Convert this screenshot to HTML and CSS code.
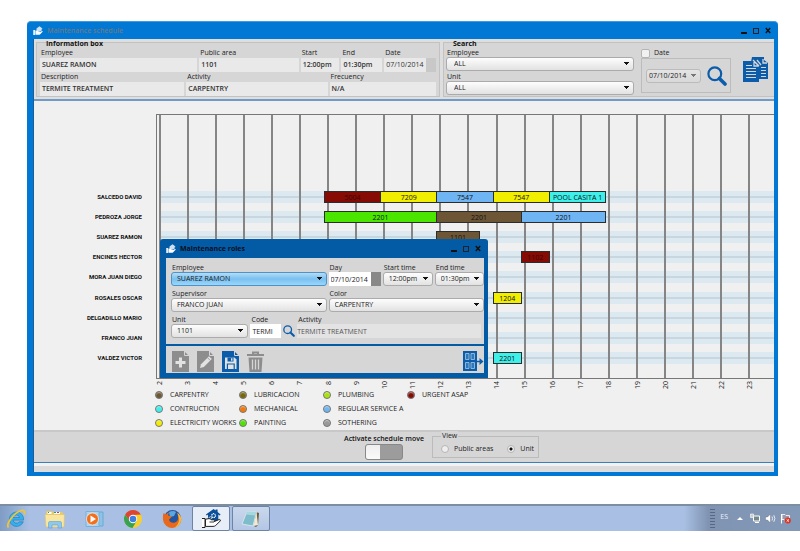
FILE: index.html
```html
<!DOCTYPE html>
<html lang="en">
<head>
<meta charset="utf-8">
<title>Maintenance schedule</title>
<link rel="stylesheet" href="styles.css">
</head>
<body>
<svg class="defs" aria-hidden="true">
  <symbol id="lens" viewBox="0 0 20 20"><circle cx="7.800" cy="7.800" r="6.400" fill="none" stroke="#0b5cab" stroke-width="2.200"/><path d="M12.400 12.400L18 18" stroke="#0b5cab" stroke-width="3.600" stroke-linecap="round"/></symbol>
  <symbol id="hand" viewBox="0 0 20 20"><path d="M7 10V5.600L5.800 6.600 4.900 5.500 12.600 0l2 1.500V.6h2v2.500l3 2.300-.9 1.100-1.400-1V13H8z" fill="#0b4f9b"/><g fill="none" stroke="#fff"><circle cx="12.600" cy="6.600" r="1.900" stroke-width="1.200" stroke-dasharray="1 .5"/><circle cx="9.400" cy="9" r="1.300" stroke-dasharray=".8 .4"/></g><path d="M4.500 10.200L8 9.600q1.600 0 2.200 1.200h3q1 .8 0 1.800l5.200-2.200q1.500.3.800 1.600l-4.600 4.600q-1 .8-2.600.8H4.500z" fill="#fff" stroke="#222" stroke-width="1" stroke-linejoin="round"/><path d="M1 9.500h3v9H1" fill="#fff" stroke="#222" stroke-width="1"/><path d="M8.500 13h4.500" stroke="#222" stroke-width=".9"/></symbol>
  <symbol id="hand-small" viewBox="0 0 10 10"><path d="M3.500 4V2.500L6.500.2l2 1.500 1 1.300-1 .5V5H4z" fill="#cfe0f2"/><path d="M.3 4h1.600v5H.3zM2.400 4.600l1.800-.2 1 .8h1.500v.8l2.500-1q.8.2.4.8L7.200 8.300q-.5.500-1.300.5H2.400z" fill="#fff"/></symbol>
</svg>

<main class="window">
  <header class="titlebar">
    <svg class="app-icon"><use href="#hand-small"/></svg>
    <h1>Maintenance schedule</h1>
    <div class="controls">
      <button aria-label="Minimize"><i class="min"></i></button>
      <button aria-label="Maximize"><i class="max"></i></button>
      <button aria-label="Close"><svg viewBox="0 0 6 6"><path d="M.8.6l4.400 4.800M5.200.6L.8 5.400" stroke="#111" stroke-width="1.500"/></svg></button>
    </div>
  </header>

  <div class="client">
    <section class="toolbar">
      <fieldset class="group info">
        <legend>Information box</legend>
        <dl class="facts first">
          <div><dt>Employee</dt><dd>SUAREZ RAMON</dd></div>
          <div><dt>Public area</dt><dd>1101</dd></div>
          <div><dt>Start</dt><dd>12:00pm</dd></div>
          <div><dt>End</dt><dd>01:30pm</dd></div>
          <div><dt>Date</dt><dd class="date">07/10/2014</dd></div>
        </dl>
        <dl class="facts second">
          <div><dt>Description</dt><dd>TERMITE TREATMENT</dd></div>
          <div><dt>Activity</dt><dd>CARPENTRY</dd></div>
          <div><dt>Frecuency</dt><dd>N/A</dd></div>
        </dl>
      </fieldset>
      <fieldset class="group search">
        <legend>Search</legend>
        <div class="search-row">
          <div class="filters">
            <div class="field"><label for="s-emp">Employee</label><select id="s-emp"><option>ALL</option></select></div>
            <div class="field"><label for="s-unit">Unit</label><select id="s-unit"><option>ALL</option></select></div>
          </div>
          <div class="by-date">
            <label class="check"><input type="checkbox"> Date</label>
            <div class="date-box">
              <select class="dim" aria-label="Search date"><option>07/10/2014</option></select>
              <button aria-label="Search"><svg class="big-lens"><use href="#lens"/></svg></button>
            </div>
          </div>
          <button class="copy" aria-label="Reports"><svg viewBox="0 0 26 26"><path d="M9 0h12v3l4 3v16H16V9l-5-4H8z" fill="#0b5cab"/><path d="M0 4h10l6 6v15H0z" fill="#0b5cab"/><path d="M10 3l6 6M11 5v4h4M20 2v4h4M14 3l4 5" stroke="#d6d6d6" stroke-width="1.300" fill="none"/><path d="M3 8.500h6M3 11.500h10M3 14.500h10M3 17.500h10M3 20.500h10M18 10.500h5M18 13.500h5M18 16.500h5M18 19.500h5" stroke="#d6d6d6" stroke-width="1.100"/></svg></button>
        </div>
      </fieldset>
    </section>

    <section class="chart">
      <div class="names rows">
        <span>SALCEDO DAVID</span><span>PEDROZA JORGE</span><span>SUAREZ RAMON</span><span>ENCINES HECTOR</span><span>MORA JUAN DIEGO</span><span>ROSALES OSCAR</span><span>DELGADILLO MARIO</span><span>FRANCO JUAN</span><span>VALDEZ VICTOR</span>
      </div>
      <div class="plot">
        <div class="bands rows"><i></i><i></i><i></i><i></i><i></i><i></i><i></i><i></i><i></i></div>
        <div class="lines"><i></i><i></i><i></i><i></i><i></i><i></i><i></i><i></i><i></i><i></i><i></i><i></i><i></i><i></i><i></i><i></i><i></i><i></i><i></i><i></i><i></i><i></i></div>
        <div class="tasks">
          <span class="maroon" style="grid-area:1/13/auto/span 4">5004</span>
          <span class="yellow" style="grid-area:1/17/auto/span 4">7209</span>
          <span class="sky" style="grid-area:1/21/auto/span 4">7547</span>
          <span class="yellow" style="grid-area:1/25/auto/span 4">7547</span>
          <span class="cyan" style="grid-area:1/29/auto/span 4">POOL CASITA 1</span>
          <span class="green" style="grid-area:2/13/auto/span 8">2201</span>
          <span class="brown" style="grid-area:2/21/auto/span 6">2201</span>
          <span class="sky" style="grid-area:2/27/auto/span 6">2201</span>
          <span class="brown" style="grid-area:3/21/auto/span 3">1101</span>
          <span class="maroon" style="grid-area:4/27/auto/span 2">1102</span>
          <span class="yellow" style="grid-area:6/25/auto/span 2">1204</span>
          <span class="cyan" style="grid-area:9/25/auto/span 2">2201</span>
        </div>
      </div>
      <div class="axis"><b>2</b><b>3</b><b>4</b><b>5</b><b>6</b><b>7</b><b>8</b><b>9</b><b>10</b><b>11</b><b>12</b><b>13</b><b>14</b><b>15</b><b>16</b><b>17</b><b>18</b><b>19</b><b>20</b><b>21</b><b>22</b><b>23</b></div>
      <ul class="key">
        <li><i class="brown"></i>CARPENTRY</li><li><i class="cyan"></i>CONTRUCTION</li><li><i class="yellow"></i>ELECTRICITY WORKS</li>
        <li><i class="olive"></i>LUBRICACION</li><li><i class="orange"></i>MECHANICAL</li><li><i class="green"></i>PAINTING</li>
        <li><i class="lime"></i>PLUMBING</li><li><i class="sky"></i>REGULAR SERVICE A</li><li><i class="gray"></i>SOTHERING</li>
        <li><i class="maroon"></i>URGENT ASAP</li>
      </ul>

      <section class="dialog" role="dialog" aria-labelledby="roles">
        <header class="titlebar">
          <svg class="app-icon"><use href="#hand-small"/></svg>
          <h2 id="roles">Maintenance roles</h2>
          <div class="controls">
            <button aria-label="Minimize"><i class="min"></i></button>
            <button aria-label="Maximize"><i class="max"></i></button>
            <button aria-label="Close"><svg viewBox="0 0 6 6"><path d="M.8.6l4.400 4.800M5.200.6L.8 5.400" stroke="#111" stroke-width="1.500"/></svg></button>
          </div>
        </header>
        <form class="form">
          <div class="line who">
            <div class="field"><label for="emp">Employee</label><select id="emp" class="active"><option>SUAREZ RAMON</option></select></div>
            <div class="field"><label for="day">Day</label><input id="day" class="day" value="07/10/2014"></div>
            <div class="field"><label for="start">Start time</label><select id="start"><option>12:00pm</option></select></div>
            <div class="field"><label for="end">End time</label><select id="end"><option>01:30pm</option></select></div>
          </div>
          <div class="line kind">
            <div class="field"><label for="sup">Supervisor</label><select id="sup"><option>FRANCO JUAN</option></select></div>
            <div class="field"><label for="color">Color</label><select id="color"><option>CARPENTRY</option></select></div>
          </div>
          <div class="line work">
            <div class="field"><label for="unit">Unit</label><select id="unit"><option>1101</option></select></div>
            <div class="field"><label for="code">Code</label><input id="code" value="TERMI"></div>
            <button type="button" class="find" aria-label="Find activity"><svg><use href="#lens"/></svg></button>
            <div class="field activity"><label for="act">Activity</label><input id="act" value="TERMITE TREATMENT" readonly></div>
          </div>
        </form>
        <footer class="actions">
          <button aria-label="New"><svg viewBox="0 0 17 21"><path d="M0 0h12l5 5v16H0z" fill="#8d8d8d"/><path d="M12.500 0v4.500H17" stroke="#d6d6d6" fill="none"/><path d="M8.500 6.500v10M3.500 11.500h10" stroke="#e2e2e2" stroke-width="3"/></svg></button>
          <button aria-label="Edit"><svg viewBox="0 0 17 21"><path d="M0 0h12l5 5v16H0z" fill="#8d8d8d"/><path d="M12.500 0v4.500H17" stroke="#d6d6d6" fill="none"/><path d="M3 17l1-3.700 8-8 2.800 2.800-8 8z" fill="#e2e2e2"/><path d="M10.500 6.700l2.800 2.800" stroke="#8d8d8d" stroke-width=".8"/></svg></button>
          <button aria-label="Save"><svg viewBox="0 0 17 21"><path d="M0 0h12l5 5v16H0z" fill="#0b5cab"/><path d="M12.500 0v4.500H17" stroke="#d6d6d6" fill="none"/><path d="M3 6.500h9.500l2 2V18H3z" fill="#e2e2e2"/><path d="M5.500 6.500h6v4h-6zM4.800 12.500h8V18h-8z" fill="#0b5cab"/><path d="M9 7.200h1.500v2.500H9zM6 13.500h5.600V18H6z" fill="#e2e2e2"/></svg></button>
          <button aria-label="Delete"><svg viewBox="0 0 17 21"><path d="M0 4h17M6 4V1.500h5V4" stroke="#8d8d8d" stroke-width="2" fill="none"/><path d="M1.500 6.500h14L14.500 21h-12z" fill="#8d8d8d"/><path d="M5.500 8.500v10M8.500 8.500v10M11.500 8.500v10" stroke="#d6d6d6" stroke-width="1.300"/></svg></button>
          <button class="exit" aria-label="Exit"><svg viewBox="0 0 21 21"><path d="M0 0h14v20H0z" fill="#0b5cab"/><path d="M2.500 2.500h3.500v6H2.500zM8 2.500h3.500v6H8zM2.500 11.500h3.500v6H2.500zM8 11.500h3.500v6H8z" fill="#2b78bd" stroke="#9dbcd8" stroke-width=".9"/><path d="M13 10.500h5" stroke="#0b5cab" stroke-width="1.500"/><path d="M16.500 7l4 3.500-4 3.500z" fill="#0b5cab"/></svg></button>
        </footer>
      </section>
    </section>

    <section class="options">
      <label class="move">Activate schedule move<input type="checkbox" role="switch"></label>
      <fieldset class="view">
        <legend>View</legend>
        <label><input type="radio" name="view">Public areas</label>
        <label><input type="radio" name="view" checked>Unit</label>
      </fieldset>
    </section>
    <div class="status"></div>
  </div>
</main>

<nav class="taskbar" aria-label="Taskbar">
  <button aria-label="Internet Explorer"><svg viewBox="0 0 20 20"><path d="M10.500 3a7.200 7.200 0 1 0 6.800 9.800h-4a3.500 3.500 0 0 1-6.300-1.700h10.600A7.200 7.200 0 0 0 10.500 3zM7 8.500a3.400 3.400 0 0 1 6.600 0z" fill="#35b0ea" stroke="#1779be" stroke-width=".6"/><path d="M2.500 18.500C-.5 15 8 3.500 15.500 1.500c3.500-.8 3.500 2 2.500 4" fill="none" stroke="#f4c52d" stroke-width="1.700"/></svg></button>
  <button aria-label="Explorer"><svg viewBox="0 0 20 20"><path d="M1 3q0-1 1-1h5l1 1h9q1 0 1 1v13H1z" fill="#e9c964"/><path d="M2.500 3h4v2h-4zM9 3h6v2H9z" fill="#fff"/><path d="M3 3h1v1H3zM9 3h2v1H9z" fill="#2e9b4d"/><path d="M12 3h2v1h-2z" fill="#c43"/><path d="M0 5.500h19.500L19 18H1z" fill="#f8e6a1" stroke="#dfc066" stroke-width=".6"/><path d="M3.500 19v-5q0-1.500 1.500-1.500h10q1.500 0 1.500 1.500v5h-3.500v-3H7v3z" fill="#8fc8ec" stroke="#5ba2d0" stroke-width=".6"/></svg></button>
  <button aria-label="Media Player"><svg viewBox="0 0 20 20"><path d="M5 3h14v14H5z" fill="#8dc3e6" stroke="#6aa8d2"/><path d="M2 2.500h13v15H2z" fill="#a9d5f0" stroke="#74b2db"/><circle cx="8.500" cy="10" r="6" fill="#f26f1d" stroke="#fff" stroke-width=".6"/><path d="M6.500 6.500l5.500 3.500-5.500 3.500z" fill="#fff"/></svg></button>
  <button aria-label="Chrome"><svg viewBox="0 0 20 20"><circle cx="10" cy="10" r="9" fill="#f7cf2e"/><path d="M2.200 5.500A9 9 0 0 1 17.800 5.500L10 6 6.200 12z" fill="#dc4436"/><path d="M2.200 5.500A9 9 0 0 0 9.500 19l4-7L6.500 12z" fill="#35a350"/><circle cx="10" cy="10" r="4.200" fill="#fff"/><circle cx="10" cy="10" r="3.300" fill="#3e7fe0"/></svg></button>
  <button aria-label="Firefox"><svg viewBox="0 0 20 20"><circle cx="10.500" cy="9.500" r="8.500" fill="#24549f"/><path d="M7 3q4-2 7 0l-2 4-4 1z" fill="#5aa8df"/><path d="M1.500 4l2.500 1.500Q5.500 3.500 7 3.500L6 6.500l4 1-3 3q1 4 6 3 4-1.500 3-7l-1-3q4 3 4.300 7A9.200 9.200 0 0 1 1 11Q.5 7 1.500 4z" fill="#e8691b"/><path d="M15.500 4q4 3 3.700 7-1 6-7 8 5-4 5-9z" fill="#f9b930"/></svg></button>
  <button class="open current" aria-label="Maintenance schedule"><svg><use href="#hand"/></svg></button>
  <button class="open" aria-label="Notepad"><svg viewBox="0 0 20 20"><path d="M15 3l3 1-1 12-2 2-2-1z" fill="#6d5a3c"/><path d="M6 2.500l9.500.5L12 17 1 15z" fill="#7fbccb" stroke="#e4f2f4" stroke-width=".7"/><path d="M6 2.500l9.500.5-1 3.500-10-1z" fill="#a8d8df"/><path d="M15.500 3l1.500 13-4.500 1z" fill="#f1ead6"/></svg></button>
  <div class="tray">
    <i class="grip"></i>
    <span>ES</span>
    <i class="up"></i>
    <svg viewBox="0 0 11 11"><path d="M3.500 3h6v5h-6zM5 9.500h4" fill="#788" stroke="#fff"/><path d="M.5 1h3v3.500h-3z" fill="#ccc" stroke="#fff" stroke-width=".6"/></svg>
    <svg viewBox="0 0 11 11"><path d="M.5 4h2L5.500 1v9L2.500 7h-2z" fill="#fff" stroke="#667" stroke-width=".4"/><path d="M7 3.500q1.200 2 0 4M8.800 2.200q2.200 3.300 0 6.600" stroke="#fff" fill="none" stroke-width=".8"/></svg>
    <svg viewBox="0 0 11 11"><path d="M1.500 1v9.500" stroke="#fff"/><path d="M2 1.500h3l1 1h3.500v5H5l-1-1H2z" fill="#99a" stroke="#fff" stroke-width=".8"/><circle cx="7.800" cy="7.500" r="3" fill="#e0321f"/><path d="M6.600 6.300L9 8.700M9 6.300L6.600 8.700" stroke="#fff" stroke-width=".9"/></svg>
  </div>
</nav>
</body>
</html>
```
FILE: styles.css
```css
* { box-sizing: border-box; }
body {
  margin: 0;
  min-height: 100vh;
  background: #fff;
  color: #222;
  font: 7px/10px "Open Sans", "Noto Sans", sans-serif;
}
h1, h2, dl, dd, ul, fieldset { margin: 0; padding: 0; border: 0; min-width: 0; }
ul { list-style: none; }
button { display: block; padding: 0; border: 0; background: none; }
svg { display: block; }
.defs { position: absolute; width: 0; height: 0; }
input, select { font: inherit; color: inherit; margin: 0; min-width: 0; }

/* windows */
.window {
  margin: 21px 22px 0 27px;
  padding: 0 4px 4px 6px;
  background: #0078d4;
  border: 1px solid #3e9be0;
  border-width: 1px 0 0;
  border-radius: 4px 4px 0 0;
}
.titlebar { display: flex; align-items: center; height: 17px; gap: 4px; }
.titlebar h1, .titlebar h2 { flex: 1; font-size: 7px; font-weight: 600; }
.titlebar h1 { color: #6b7885; }
.titlebar h2 { color: #0b0f1c; font-weight: 700; }
.app-icon { width: 10px; height: 10px; }
.controls { display: flex; gap: 5px; padding-right: 2px; }
.controls button { width: 7px; height: 7px; }
.controls svg { width: 6px; height: 7px; }
.min, .max { display: block; width: 6px; height: 6px; }
.min { border-bottom: 2px solid #111; }
.max { border: 1px solid #222; }
.client { border-left: 1px solid #1c5c98; background: #f0f0f0; }

/* toolbar */
.toolbar {
  display: grid;
  grid-template-columns: 404px 1fr;
  gap: 3px;
  padding: 3px 0 2px 2px;
  background: #dedede;
  border-bottom: 2px solid #6f9cc7;
}
.group {
  position: relative;
  border: 1px solid #c2c2c2;
  background: #d6d6d6;
  height: 55px;
}
.group > legend {
  position: absolute;
  top: -4px;
  left: 7px;
  color: #111;
  font-weight: 700;
  line-height: 9px;
}
.info { padding: 5px 3px 0; }
.facts { display: grid; column-gap: 2px; }
.first { grid-template-columns: 158fr 100fr 39fr 41fr 52fr; }
.second { grid-template-columns: 145fr 142fr 107fr; }
.facts dt { padding-left: 1px; line-height: 10px; white-space: nowrap; }
.facts dd {
  height: 14px;
  padding-left: 2px;
  background: #e9e9e9;
  color: #333;
  font-weight: 600;
  line-height: 14px;
  white-space: nowrap;
}
.facts .date { border-right: 10px solid #c8c8c8; font-weight: 400; }
.search { padding: 5px 0 0 2px; border-right: 0; }
.search-row {
  display: grid;
  grid-template-columns: 188fr 90fr 36fr;
  column-gap: 7px;
}
.field { display: flex; flex-direction: column; min-width: 0; }
.field label { padding-left: 1px; line-height: 9px; white-space: nowrap; }
.filters { display: grid; row-gap: 1px; }
select {
  --arrow: #111;
  --face: linear-gradient(#fdfdfd, #e2e2e2);
  appearance: none;
  width: 100%;
  height: 14px;
  padding: 0 10px 0 7px;
  border: 1px solid #ababab;
  border-radius: 3px;
  background:
    linear-gradient(var(--arrow), var(--arrow)) right 4px top 4px / 5px 1px no-repeat,
    linear-gradient(var(--arrow), var(--arrow)) right 5px top 5px / 3px 1px no-repeat,
    linear-gradient(var(--arrow), var(--arrow)) right 6px top 6px / 1px 1px no-repeat,
    var(--face);
  line-height: 12px;
}
select.active { --face: linear-gradient(#b5dcf6, #79c0f0 50%, #9ad6fb); border-color: #4d92c8; }
select.dim { --arrow: #777; --face: linear-gradient(#e4e4e4, #d8d8d8); padding: 0 8px 0 2px; border-color: #bbb; }
.check { display: flex; align-items: center; gap: 4px; }
.check input {
  appearance: none;
  width: 9px;
  height: 9px;
  border: 1px solid #b4b4b4;
  border-radius: 2px;
  background: #f1f1f1;
}
.date-box {
  display: flex;
  align-items: center;
  gap: 6px;
  height: 35px;
  padding: 0 3px 0 4px;
  border: 1px solid #bcbcbc;
}
.date-box select { flex: 1; }
.big-lens { width: 20px; height: 20px; }
.copy { align-self: start; padding: 9px 0 0 5px; }
.copy svg { width: 26px; height: 26px; }

/* chart */
.chart {
  position: relative;
  display: grid;
  grid-template-columns: 122px 1fr;
  padding-top: 13px;
}
.rows, .tasks { display: grid; grid-template-rows: repeat(9, 1fr); height: 181px; }
.names {
  margin-top: 73px;
  padding-right: 14px;
  justify-items: end;
  align-items: center;
  color: #111;
  font-family: Roboto, "Open Sans", sans-serif;
  font-size: 6px;
  font-weight: 700;
}
.plot {
  display: grid;
  border: solid #777;
  border-width: 1px 0 1px 1px;
  height: 265px;
}
.plot > * { grid-area: 1 / 1; min-width: 0; }
.bands, .tasks { margin-top: 72px; }
.bands { padding-left: 3px; align-items: center; }
.bands i {
  height: 12px;
  background: linear-gradient(#dce9f1 5px, #c8d7df 5px 7px, #dce9f1 7px);
}
.lines, .axis { display: grid; grid-template-columns: repeat(22, 1fr); }
.lines { padding-left: 2px; margin-right: -2px; overflow: hidden; }
.lines i { border-left: 2px solid #858585; }
.tasks { grid-template-columns: repeat(44, 1fr); align-items: center; margin-left: -2px; }
.tasks span {
  height: 12px;
  margin-right: -1px;
  border: 1px solid #2c2c2c;
  overflow: hidden;
  color: #111;
  line-height: 11px;
  text-align: center;
  white-space: nowrap;
}
.maroon { background: #850b04; }
.yellow { background: #f2ee00; }
.sky { background: #70b5f3; }
.cyan { background: #3df0ea; }
.green { background: #4be600; }
.brown { background: #6d5636; }
.olive { background: #77680a; }
.orange { background: #f4780c; }
.lime { background: #a9e30a; }
.gray { background: #999; }
.tasks .maroon { color: #3a0500; }
.axis { grid-column: 2; height: 9px; padding-top: 2px; }
.axis b {
  justify-self: start;
  align-self: start;
  width: 8px;
  font-weight: 400;
  line-height: 8px;
  writing-mode: vertical-rl;
  transform: rotate(180deg);
}
.key {
  grid-column: 2;
  display: grid;
  grid-auto-flow: column;
  grid-template-rows: repeat(3, 14px);
  grid-auto-columns: 84px;
  justify-content: start;
  margin-left: -1px;
}
.key li { display: flex; align-items: center; gap: 7px; white-space: nowrap; }
.key i {
  width: 8px;
  height: 8px;
  border: 1px solid #777;
  border-radius: 50%;
  box-shadow: inset 0 1px 1px #fff8;
}

/* dialog */
.dialog {
  position: absolute;
  top: 138px;
  left: 126px;
  width: 328px;
  padding: 0 4px 5px 6px;
  background: #035ba5;
  border-radius: 3px 3px 0 0;
}
.dialog .titlebar { height: 19px; }
.form { padding: 5px 0 6px 5px; background: #d6d6d6; }
.line { display: grid; column-gap: 2px; margin-bottom: 3px; }
.who { grid-template-columns: 155fr 52fr 50fr 49fr; }
.kind { grid-template-columns: 155fr 155fr; }
.work { grid-template-columns: 78fr 31fr 12px 188fr; margin: 0; align-items: end; }
.field input {
  width: 100%;
  height: 14px;
  padding: 0 2px;
  border: 0;
  background: #fff;
}
.dialog select { padding-left: 5px; }
.field .day { border-right: 10px solid #888; }
.activity { padding-right: 3px; }
.activity input { padding: 0; background: #e3e3e3; color: #555; }
.find { padding-bottom: 1px; }
.find svg { width: 12px; height: 12px; }
.actions {
  display: flex;
  gap: 8px;
  padding: 5px 0 1px 6px;
  border-top: 2px solid #035ba5;
  background: #d6d6d6;
}
.actions svg { width: 17px; height: 21px; }
.actions .exit { margin-left: auto; }
.exit svg { width: 21px; }

/* view options */
.options {
  display: flex;
  align-items: center;
  gap: 8px;
  height: 32px;
  padding-left: 310px;
  border-top: 2px solid #c8c8c8;
  background: #d6d6d6;
}
.move { color: #111; font-weight: 600; text-align: center; white-space: nowrap; }
.move input {
  appearance: none;
  display: block;
  width: 38px;
  height: 16px;
  margin: 0 auto;
  border: 1px solid #888;
  border-radius: 3px;
  background: linear-gradient(#eee, #fafafa) 0 0 / 14px 100% no-repeat, #9c9c9c;
}
.view {
  position: relative;
  display: flex;
  align-items: center;
  gap: 14px;
  height: 22px;
  padding: 3px 4px 0 8px;
  border: 1px solid #bbb;
}
.view legend { position: absolute; top: -6px; left: 8px; padding: 0 1px; background: #d6d6d6; }
.view label { display: flex; align-items: center; gap: 5px; white-space: nowrap; }
.view input {
  appearance: none;
  width: 8px;
  height: 8px;
  border: 1px solid #b5b5b5;
  border-radius: 50%;
  background: #eee;
}
.view input:checked { background: radial-gradient(#111 0 1px, #eee 2px); }
.status { height: 10px; border-top: 1px solid #3a7fb8; background: linear-gradient(#f2f2f2 3px, #dcdcdc 3px); }

/* taskbar */
.taskbar {
  display: flex;
  align-items: center;
  height: 27px;
  margin-top: 28px;
  padding-left: 6px;
  border-top: 2px solid #7d8ea3;
  background: linear-gradient(90deg, #7f9cc4, #a9c0e4 30px, #a9c0e4);
}
.taskbar > button { margin-right: 19px; }
.taskbar > button svg { width: 20px; height: 20px; }
.taskbar > .open {
  height: 25px;
  margin: 0 1px;
  padding: 2px 8px;
  border: 1px solid #6d84a6;
  border-radius: 2px;
  background: linear-gradient(#cad8ec, #b3c6e4);
}
.taskbar > .current { margin-left: -9px; background: #e8eef7; }
.tray {
  display: flex;
  align-items: center;
  gap: 4px;
  height: 100%;
  margin-left: auto;
  padding: 0 9px 0 26px;
  background: linear-gradient(90deg, #a9c0e4, #8094b2 24px, #8399b8);
  color: #eef;
}
.tray svg { width: 11px; height: 11px; }
.tray span { margin: 0 5px 4px 1px; font-size: 7px; }
.grip { width: 5px; height: 19px; background: repeating-linear-gradient(#566a87 0 1px, transparent 1px 3px); }
.up { margin-right: 3px; border: solid transparent; border-width: 0 3px 3px; border-bottom-color: #fff; }
```
